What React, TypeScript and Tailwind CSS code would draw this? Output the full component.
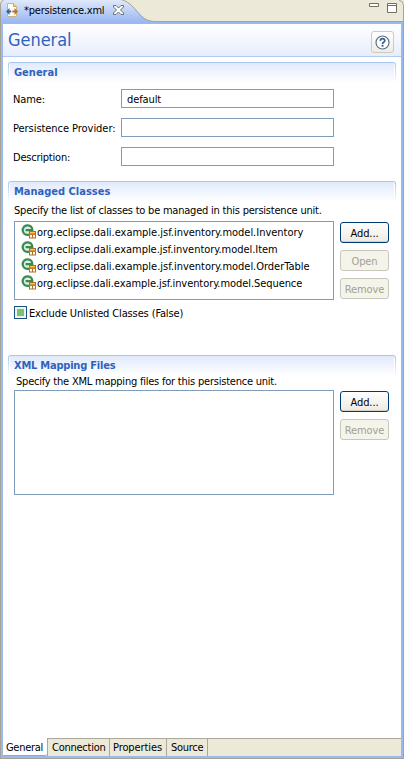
import React from "react";

function FileIcon() {
  return (
    <svg width="12" height="14" viewBox="0 0 12 14" className="block shrink-0">
      <path d="M1.500 .5h6l3 3v10h-9z" fill="#fffdf6" stroke="#c4b48a" />
      <path d="M7.500 .5v3h3" fill="#f0d48c" stroke="#c9a860" />
      <path d="M0 8.500l3.500-3.500V7.500h1.700v2H3.500v2.500z" fill="#2f6a9c" />
      <path d="M12 8.500L8.500 5V7.500H6.300v2h2.200v2.500z" fill="#b8732c" />
    </svg>
  );
}

function CloseIcon() {
  return (
    <svg width="11" height="10" viewBox="0 0 11 10" className="block shrink-0">
      <path
        d="M.5 .5h2.500l2.500 2.500 2.500-2.500h2.500v1.500l-3 3 3 3v1.500H8L5.500 7 3 9.500H.5V8l3-3-3-3z"
        fill="#fff"
        stroke="#6f6c62"
      />
    </svg>
  );
}

function ClassIcon() {
  return (
    <svg width="16" height="16" viewBox="0 0 16 16" className="block shrink-0">
      <circle cx="6.500" cy="6" r="6.300" fill="#dcefe0" />
      <path
        d="M4.600 6.200H11.300C11.300 3 9.200 1.300 6.500 1.300A4.800 4.800 0 0 0 6.500 10.900H9"
        fill="none"
        stroke="#3a8a56"
        strokeWidth="2.200"
      />
      <path d="M8 7h7v7.500H8z" fill="#a9702c" />
      <path d="M9 8h5v1.500H9z" fill="#ffc23c" />
      <path d="M9 11h2v2.500H9zM12 11h2v2.500h-2z" fill="#fffbe8" />
      <path d="M8 10h7v1H8z" fill="#dd6f22" />
    </svg>
  );
}

function Section({ title, tracking, children, className }: { title: string; tracking: string; children: React.ReactNode; className: string }) {
  return (
    <section className={`ml-[5px] w-[388px] ${className}`}>
      <div className="h-[21px] rounded-t-[3px] border-t border-[#a9c5f1] bg-gradient-to-b from-[#a9c5f1] to-white px-px">
        <h2 className={`h-5 rounded-t-[2px] border-x border-white bg-gradient-to-b from-[#e1eafb] to-white pl-1 text-[11px] leading-[19px] font-bold text-[#2f62bd] ${tracking}`}>
          {title}
        </h2>
      </div>
      {children}
    </section>
  );
}

function Field({ label, value, tracking }: { label: string; value?: string; tracking: string }) {
  return (
    <div className="flex h-[19px] items-center">
      <label className={`w-[108px] shrink-0 pt-[2px] ${tracking}`}>{label}</label>
      <div className="h-[19px] w-[213px] border border-[#7f9db9] bg-white pl-[5px] leading-[19px] tracking-[-0.100px]">{value}</div>
    </div>
  );
}

function Button({ children, disabled }: { children: string; disabled?: boolean }) {
  return (
    <button
      className={`block h-[21px] w-[49px] rounded-[3px] border text-center leading-[21px] tracking-[-0.100px] whitespace-nowrap ${
        disabled
          ? "border-[#c9c7ba] bg-[#f5f4ea] text-[#a1a192]"
          : "border-[#003c74] bg-gradient-to-b from-white to-[#eceae2] shadow-[inset_0_-1px_0_#d6d0c5]"
      }`}
    >
      {children}
    </button>
  );
}

const classes = [
  { name: "Inventory", tracking: "tracking-[-0.020px]" },
  { name: "Item", tracking: "tracking-[-0.040px]" },
  { name: "OrderTable", tracking: "tracking-[-0.020px]" },
  { name: "Sequence", tracking: "tracking-[-0.070px]" },
];

export default function App() {
  return (
    <div className="flex h-[759px] w-[404px] flex-col overflow-hidden bg-[#ece9d8] font-['DejaVu_Sans_Condensed','DejaVu_Sans',sans-serif] text-[11px] leading-[14px] whitespace-nowrap text-black">
      <header className="relative h-[22px] shrink-0">
        <svg width="404" height="22" className="absolute inset-0 block">
          <defs>
            <linearGradient id="tab" x1="0" y1="0" x2="0" y2="1">
              <stop offset="0" stopColor="#e0e9fb" />
              <stop offset="1" stopColor="#9ab8f2" />
            </linearGradient>
          </defs>
          <path d="M0 22V3Q1 0 4 0H122C132 2 136 10 142 16Q147 21 154 21.500V22Z" fill="url(#tab)" />
          <path d="M.5 22V4Q1 1 4 -.5H121C131 2 135 10 141 16Q146 21 154 21.500H404" fill="none" stroke="#a5a394" />
          <path d="M399 0q4 1 4.500 5v17" fill="none" stroke="#a5a394" />
        </svg>
        <div className="relative flex h-5 items-center pl-[6px]">
          <FileIcon />
          <span className="ml-[6px] w-[81px] pt-[2px] tracking-[-0.200px]">*persistence.xml</span>
          <span className="ml-[8px]"><CloseIcon /></span>
          <svg width="30" height="12" viewBox="0 0 30 12" className="mr-[6px] mb-[2px] ml-auto block">
            <path d="M1.500 .5h9v3h-9z" fill="#fff" stroke="#716f64" />
            <path d="M19.500 .5h9v9h-9zM19.500 2.500h9" fill="#fff" stroke="#716f64" />
          </svg>
        </div>
      </header>

      <div className="min-h-0 flex-1 border-x border-b border-[#a5a394]">
        <div className="flex h-full flex-col border-2 border-[#9ab8f2] bg-white">
          <div className="flex h-[33px] shrink-0 items-center justify-between border-b border-[#b1caf4] bg-gradient-to-b from-white to-[#e6edfb] pr-[7px] pl-[5px]">
            <h1 className="text-[18px] leading-[32px] tracking-[-0.050px] text-[#2f62bd]">General</h1>
            <button className="mt-[4px] flex h-[22px] w-[23px] items-center justify-center rounded-[3px] border border-[#cecbb9] bg-gradient-to-b from-white to-[#efede2]">
              <svg width="15" height="15" viewBox="0 0 15 15" className="block">
                <circle cx="7.500" cy="7.500" r="6.500" fill="#fff" stroke="#536d93" strokeWidth="1.200" />
                <path d="M5.300 5.900q.1-2.200 2.200-2.200t2.300 1.800q0 1.200-1.200 1.800-1.100.6-1.100 1.900" fill="none" stroke="#3f5c87" strokeWidth="1.700" />
                <path d="M6.600 10h1.900v1.700H6.600z" fill="#3f5c87" />
              </svg>
            </button>
          </div>

          <main className="min-h-0 flex-1">
            <Section title="General" tracking="tracking-normal" className="h-[119px] pt-[5px]">
              <div className="flex flex-col gap-[10px] pt-[6px] pl-[5px]">
                <Field label="Name:" value="default" tracking="tracking-[-0.100px]" />
                <Field label="Persistence Provider:" tracking="tracking-[-0.050px]" />
                <Field label="Description:" tracking="tracking-[-0.220px]" />
              </div>
            </Section>

            <Section title="Managed Classes" tracking="tracking-normal" className="mt-[5px] h-[174px]">
              <p className="h-[19px] pl-[6px] leading-[17px] tracking-[-0.220px]">Specify the list of classes to be managed in this persistence unit.</p>
              <div className="flex gap-[6px] pl-[6px]">
                <ul className="h-[79px] w-[320px] border border-[#7f9db9] pt-px pl-[6px]">
                  {classes.map(({ name, tracking }) => (
                    <li key={name} className="flex h-[17px] items-center">
                      <ClassIcon />
                      <span className={`pt-[2px] ${tracking}`}>org.eclipse.dali.example.jsf.inventory.model.{name}</span>
                    </li>
                  ))}
                </ul>
                <div className="flex flex-col gap-[7px] pt-px">
                  <Button>Add...</Button>
                  <Button disabled>Open</Button>
                  <Button disabled>Remove</Button>
                </div>
              </div>
              <label className="mt-[6px] flex h-[13px] items-center gap-[2px] pl-[6px] tracking-[-0.130px]">
                <span className="flex h-[13px] w-[13px] items-center justify-center border border-[#1c5180] bg-[#f3f3ee]">
                  <span className="h-[7px] w-[7px] bg-[#73c473]" />
                </span>
                <span className="pt-[2px]">Exclude Unlisted Classes (False)</span>
              </label>
            </Section>

            <Section title="XML Mapping Files" tracking="tracking-[-0.220px]" className="">
              <p className="h-[14px] pl-[8px] leading-[11px] tracking-[-0.220px]">Specify the XML mapping files for this persistence unit.</p>
              <div className="flex gap-[6px] pl-[6px]">
                <div className="h-[105px] w-[320px] border border-[#7f9db9]" />
                <div className="flex flex-col gap-[7px] pt-px">
                  <Button>Add...</Button>
                  <Button disabled>Remove</Button>
                </div>
              </div>
            </Section>
          </main>

          <nav className="flex h-[18px] shrink-0 bg-[#ece9d8] leading-[17px]">
            <span className="w-[44px] rounded-br-[2px] border-b border-[#aca899] bg-white pl-[3px] leading-[19px] tracking-[-0.300px]">General</span>
            <span className="w-[63px] border-t border-r border-l border-[#aca899] pl-[4px] tracking-[-0.250px]">Connection</span>
            <span className="w-[57px] border-t border-r border-[#aca899] pl-[3px] tracking-[-0.100px]">Properties</span>
            <span className="w-[41px] border-t border-r border-[#aca899] pl-[4px] tracking-[-0.300px]">Source</span>
            <span className="flex-1 border-t border-[#aca899]" />
          </nav>
        </div>
      </div>
    </div>
  );
}
